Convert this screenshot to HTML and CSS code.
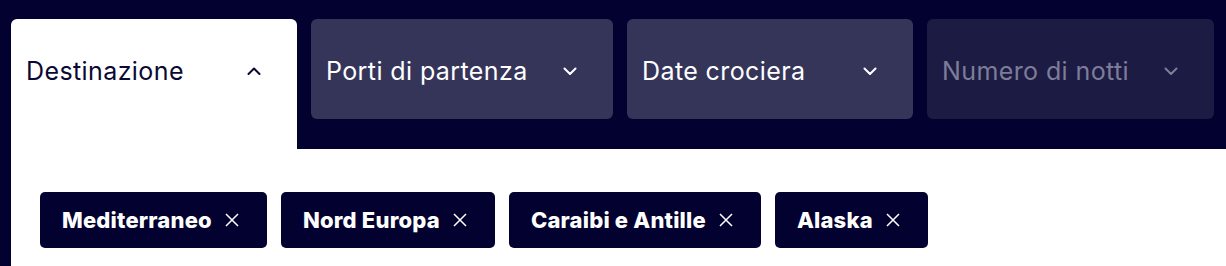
FILE: index.html
```html
<!DOCTYPE html>
<html lang="it">
<head>
    <meta charset="UTF-8">
    <title>Cerca crociera</title>
    <link rel="stylesheet" href="styles.css">
</head>
<body>
    <div class="search">
        <div class="tabs">
            <button class="tab active">
                <span>Destinazione</span>
                <svg class="chev" width="14" height="8" viewBox="0 0 14 8"><path d="M1.5 7 L7 1.5 L12.5 7" /></svg>
            </button>
            <button class="tab">
                <span>Porti di partenza</span>
                <svg class="chev" width="14" height="8" viewBox="0 0 14 8"><path d="M1.5 1.5 L7 7 L12.5 1.5" /></svg>
            </button>
            <button class="tab">
                <span>Date crociera</span>
                <svg class="chev" width="14" height="8" viewBox="0 0 14 8"><path d="M1.5 1.5 L7 7 L12.5 1.5" /></svg>
            </button>
            <button class="tab disabled">
                <span>Numero di notti</span>
                <svg class="chev" width="14" height="8" viewBox="0 0 14 8"><path d="M1.5 1.5 L7 7 L12.5 1.5" /></svg>
            </button>
        </div>

        <div class="panel">
            <div class="chips">
                <div class="chip">Mediterraneo <svg class="x" width="14" height="14" viewBox="0 0 14 14"><path d="M1 1 L13 13 M13 1 L1 13" /></svg></div>
                <div class="chip">Nord Europa <svg class="x" width="14" height="14" viewBox="0 0 14 14"><path d="M1 1 L13 13 M13 1 L1 13" /></svg></div>
                <div class="chip">Caraibi e Antille <svg class="x" width="14" height="14" viewBox="0 0 14 14"><path d="M1 1 L13 13 M13 1 L1 13" /></svg></div>
                <div class="chip">Alaska <svg class="x" width="14" height="14" viewBox="0 0 14 14"><path d="M1 1 L13 13 M13 1 L1 13" /></svg></div>
            </div>
        </div>
    </div>
</body>
</html>
```

FILE: styles.css
```css
* {
    margin: 0;
    padding: 0;
    box-sizing: border-box;
}

body {
    font-family: Inter, 'Noto Sans', sans-serif;
    background: #03012f;
    color: white;
    overflow: hidden;
}

.search {
    padding-left: 11px;
}

.tabs {
    display: flex;
    align-items: flex-start;
    gap: 14px;
    padding-top: 19px;
    padding-bottom: 30px;
}

.tab {
    display: flex;
    align-items: center;
    justify-content: space-between;
    width: 286px;
    height: 100px;
    padding: 4px 36px 0 15px;
    border: none;
    border-radius: 6px;
    background: #35355a;
    color: white;
    font-family: inherit;
    font-size: 25px;
    letter-spacing: 0.4px;
    text-align: left;
}

.tab:nth-child(2) {
    width: 302px;
}

.tab:nth-child(4) {
    width: 287px;
}

.tab.active {
    height: 130px;
    margin-bottom: -30px;
    padding-bottom: 30px;
    border-radius: 6px 6px 0 0;
    background: white;
    color: #0a0933;
}

.tab.disabled {
    background: #1c1b43;
    color: #7e7d99;
}

.chev {
    fill: none;
    stroke: currentColor;
    stroke-width: 2;
    stroke-linecap: round;
    stroke-linejoin: round;
}

.panel {
    background: white;
    padding: 43px 29px 40px;
}

.chips {
    display: flex;
    gap: 14px;
}

.chip {
    display: flex;
    align-items: center;
    gap: 13px;
    height: 56px;
    padding: 0 28px 0 22px;
    border-radius: 5px;
    background: #03012f;
    color: white;
    font-size: 22px;
    font-weight: 800;
    letter-spacing: 0.2px;
}

.x {
    fill: none;
    stroke: white;
    stroke-width: 1.5;
}
```
